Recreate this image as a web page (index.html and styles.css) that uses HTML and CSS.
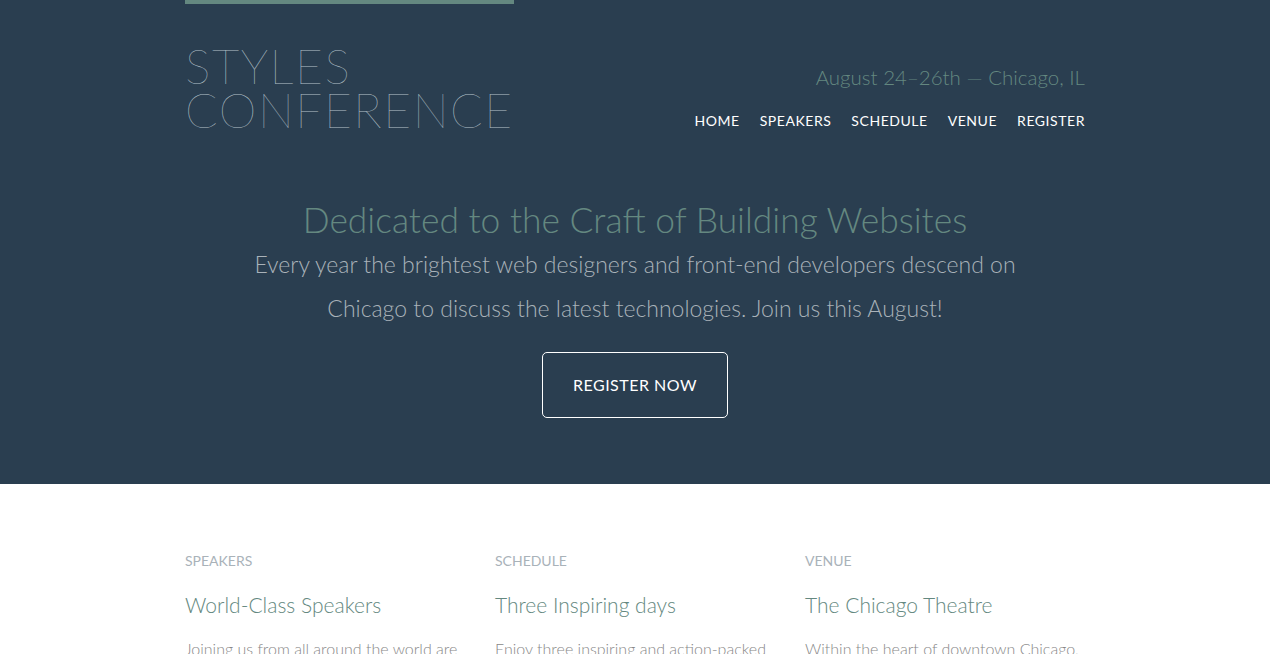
FILE: index.html
```html
<!DOCTYPE html>
<html lang="en">
<head>
<meta charset="utf-8">
<title>Styles Conference</title>
<link rel="stylesheet" href="styles.css">
</head>
<body>
<header class="primary-header">
  <div class="container header-row">
    <h1 class="logo">Styles<br>Conference</h1>
    <div class="header-right">
      <h3 class="tagline">August 24&ndash;26th &mdash; Chicago, IL</h3>
      <nav class="primary-nav">
        <a href="#">Home</a>
        <a href="#">Speakers</a>
        <a href="#">Schedule</a>
        <a href="#">Venue</a>
        <a href="#">Register</a>
      </nav>
    </div>
  </div>
</header>
<section class="hero">
  <div class="container hero-inner">
    <h2>Dedicated to the Craft of Building Websites</h2>
    <p>Every year the brightest web designers and front-end developers descend on Chicago to discuss the latest technologies. Join us this August!</p>
    <a class="btn" href="#">Register Now</a>
  </div>
</section>
<section class="teasers">
  <div class="container grid">
    <div class="col">
      <h5>Speakers</h5>
      <h3>World-Class Speakers</h3>
      <p>Joining us from all around the world are over twenty fantastic speakers, here to share their stories.</p>
    </div>
    <div class="col">
      <h5>Schedule</h5>
      <h3>Three Inspiring days</h3>
      <p>Enjoy three inspiring and action-packed days of talks, workshops, and networking with peers.</p>
    </div>
    <div class="col">
      <h5>Venue</h5>
      <h3>The Chicago Theatre</h3>
      <p>Within the heart of downtown Chicago, The Chicago Theatre is a landmark of the city.</p>
    </div>
  </div>
</section>
</body>
</html>
```

FILE: styles.css
```css
* { box-sizing: border-box; }
html, body, h1, h2, h3, h5, p { margin: 0; padding: 0; }
body {
  background: #fff;
  color: #888;
  font: 300 16px/22px "Lato", "Open Sans", "Liberation Sans", sans-serif;
}
a { text-decoration: none; }
.container {
  width: 960px;
  margin: 0 auto;
  padding: 0 30px;
}
.primary-header {
  background: #2a3e50;
  padding-bottom: 22px;
}
.header-row {
  display: flex;
  justify-content: space-between;
  align-items: flex-start;
}
.logo {
  border-top: 4px solid #648880;
  color: #b4c0c8;
  font-size: 48px;
  font-weight: 100;
  letter-spacing: 1.5px;
  line-height: 44px;
  padding: 40px 0 22px 0;
  text-transform: uppercase;
}
.header-right {
  text-align: right;
}
.tagline {
  color: #648880;
  font-size: 20.5px;
  font-weight: 300;
  line-height: 22px;
  margin: 66px 0 22px 0;
}
.primary-nav {
  display: flex;
  justify-content: flex-end;
  gap: 20px;
  font-size: 14px;
  font-weight: 400;
  letter-spacing: .55px;
  line-height: 22px;
  text-transform: uppercase;
}
.primary-nav a { color: #fff; }
.hero {
  background: #2a3e50;
  padding: 22px 0 66px 0;
  text-align: center;
}
.hero-inner {
  line-height: 44px;
}
.hero h2 {
  color: #648880;
  font-size: 35.4px;
  font-weight: 300;
  line-height: 44px;
}
.hero p {
  color: #a9b2b9;
  font-size: 23px;
  font-weight: 300;
  line-height: 44px;
  padding: 0 50px;
  margin-bottom: 22px;
}
.btn {
  display: inline-block;
  border: 1px solid #fff;
  border-radius: 5px;
  color: #fff;
  font-size: 16px;
  font-weight: 400;
  letter-spacing: .5px;
  line-height: 44px;
  padding: 10px 30px;
  text-transform: uppercase;
}
.teasers {
  padding: 66px 0 22px 0;
}
.grid {
  display: grid;
  grid-template-columns: repeat(3, 1fr);
  column-gap: 30px;
}
.col h5 {
  color: #a9b2b9;
  font-size: 14px;
  font-weight: 400;
  line-height: 22px;
  margin-bottom: 22px;
  text-transform: uppercase;
}
.col h3 {
  color: #648880;
  font-size: 21px;
  font-weight: 300;
  line-height: 22px;
  margin-bottom: 22px;
}
.col p {
  margin-bottom: 22px;
}
```
